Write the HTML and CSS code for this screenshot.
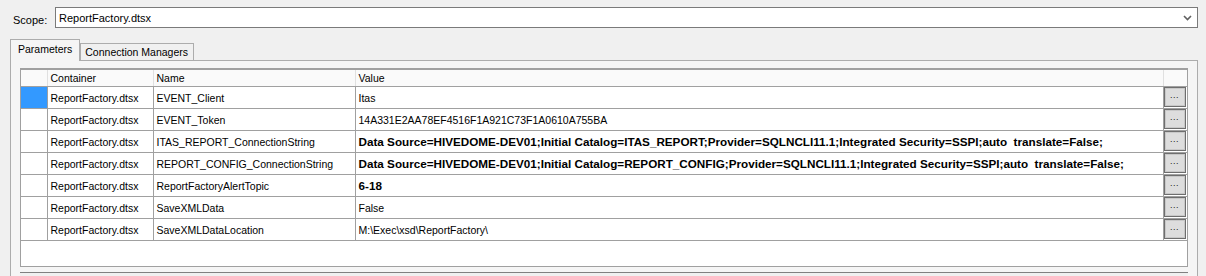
FILE: index.html
```html
<!DOCTYPE html>
<html>
<head>
<meta charset="utf-8">
<link rel="stylesheet" href="styles.css">
</head>
<body>
<div class="scope-row">
  <span class="scope-label">Scope:</span>
  <div class="combo">
    <span class="combo-text">ReportFactory.dtsx</span>
    <svg class="chev" width="9" height="6" viewBox="0 0 9 6"><path d="M1 1 L4.5 4.5 L8 1" fill="none" stroke="#606060" stroke-width="1.6"/></svg>
  </div>
</div>
<div class="tabstrip">
  <div class="tab active">Parameters</div>
  <div class="tab">Connection Managers</div>
</div>
<div class="panel">
  <div class="grid">
    <table>
      <colgroup>
        <col class="c-rh"><col class="c-cont"><col class="c-name"><col class="c-val"><col class="c-btn">
      </colgroup>
      <thead>
        <tr><th></th><th>Container</th><th>Name</th><th>Value</th><th></th></tr>
      </thead>
      <tbody>
        <tr><td class="rh sel"></td><td>ReportFactory.dtsx</td><td>EVENT_Client</td><td>Itas</td><td class="bc"><div class="btn">...</div></td></tr>
        <tr><td class="rh"></td><td>ReportFactory.dtsx</td><td>EVENT_Token</td><td>14A331E2AA78EF4516F1A921C73F1A0610A755BA</td><td class="bc"><div class="btn">...</div></td></tr>
        <tr><td class="rh"></td><td>ReportFactory.dtsx</td><td>ITAS_REPORT_ConnectionString</td><td class="b">Data Source=HIVEDOME-DEV01;Initial Catalog=ITAS_REPORT;Provider=SQLNCLI11.1;Integrated Security=SSPI;auto&nbsp; translate=False;</td><td class="bc"><div class="btn">...</div></td></tr>
        <tr><td class="rh"></td><td>ReportFactory.dtsx</td><td>REPORT_CONFIG_ConnectionString</td><td class="b">Data Source=HIVEDOME-DEV01;Initial Catalog=REPORT_CONFIG;Provider=SQLNCLI11.1;Integrated Security=SSPI;auto&nbsp; translate=False;</td><td class="bc"><div class="btn">...</div></td></tr>
        <tr><td class="rh"></td><td>ReportFactory.dtsx</td><td>ReportFactoryAlertTopic</td><td class="b">6-18</td><td class="bc"><div class="btn">...</div></td></tr>
        <tr><td class="rh"></td><td>ReportFactory.dtsx</td><td>SaveXMLData</td><td>False</td><td class="bc"><div class="btn">...</div></td></tr>
        <tr><td class="rh"></td><td>ReportFactory.dtsx</td><td>SaveXMLDataLocation</td><td>M:\Exec\xsd\ReportFactory\</td><td class="bc"><div class="btn">...</div></td></tr>
      </tbody>
    </table>
    <div class="grid-empty"></div>
  </div>
  <div class="lower-box"></div>
</div>
</body>
</html>
```
FILE: styles.css
```css
html, body {
  margin: 0;
  padding: 0;
  background: #f0f0f0;
  font-family: "Liberation Sans", Arial, sans-serif;
  font-size: 10.5px;
  color: #000;
  overflow: hidden;
}
.scope-row {
  display: flex;
  align-items: center;
  padding: 7px 8px 0 13px;
  height: 21px;
}
.scope-label {
  width: 42px;
  font-size: 11px;
  padding-top: 4px;
}
.combo {
  flex: 1;
  height: 19px;
  border: 1px solid #7a7a7a;
  background: #fff;
  display: flex;
  align-items: center;
  padding-left: 3px;
  font-size: 11px;
}
.combo-text { flex: 1; }
.chev { margin-right: 5px; }
.tabstrip {
  display: flex;
  align-items: flex-end;
  margin-top: 12px;
  padding-left: 10px;
  height: 20px;
}
.tab {
  height: 16px;
  line-height: 16px;
  border: 1px solid #acacac;
  border-bottom: none;
  padding: 0 5px 0 4px;
  background: #f0f0f0;
}
.tab.active {
  height: 21px;
  line-height: 19px;
  margin-bottom: -1px;
  padding: 0 7px;
  background: #f5f5f5;
  position: relative;
  z-index: 1;
  border-color: #acacac;
}
.panel {
  border: 1px solid #acacac;
  margin: 0 8px 0 10px;
  padding: 7px 9px 0 9px;
  height: 300px;
  background: #f5f5f5;
}
.grid {
  border: 1px solid #a0a0a0;
  border-top: 2px solid #a0a0a0;
  background: #fff;
}
table {
  border-collapse: collapse;
  table-layout: fixed;
  width: 1166px;
}
.c-rh { width: 26px; }
.c-cont { width: 106px; }
.c-name { width: 202px; }
.c-val { width: 808px; }
.c-btn { width: 24px; }
th {
  height: 16px;
  background: #fafafa;
  font-weight: normal;
  text-align: left;
  padding: 0 0 0 3px;
  border-right: 1px solid #e0e0e0;
  border-bottom: 1px solid #a0a0a0;
  white-space: nowrap;
  overflow: hidden;
}
th:last-child { border-right: none; }
td {
  height: 21px;
  padding: 0 0 0 3px;
  border-right: 1px solid #a0a0a0;
  border-bottom: 1px solid #a0a0a0;
  white-space: nowrap;
  overflow: hidden;
}
td:last-child { border-right: none; }
td.rh { padding: 0; }
td.sel { background: #3399ff; }
td.b { font-weight: bold; font-size: 11.7px; }
td.bc { padding: 0; vertical-align: top; }
.btn {
  width: 20px;
  height: 18px;
  margin: 0 0 0 0;
  border: 1px solid #6e6e6e;
  background: #dddddd;
  box-shadow: inset 0 0 0 1px #c8c8c8;
  font-size: 9px;
  line-height: 15px;
  text-align: center;
  letter-spacing: 0.5px;
  color: #202020;
}
.grid-empty { height: 25px; }
.lower-box {
  margin-top: 5px;
  border-top: 1px solid #808080;
  height: 20px;
  background: #f0f0f0;
}
```
